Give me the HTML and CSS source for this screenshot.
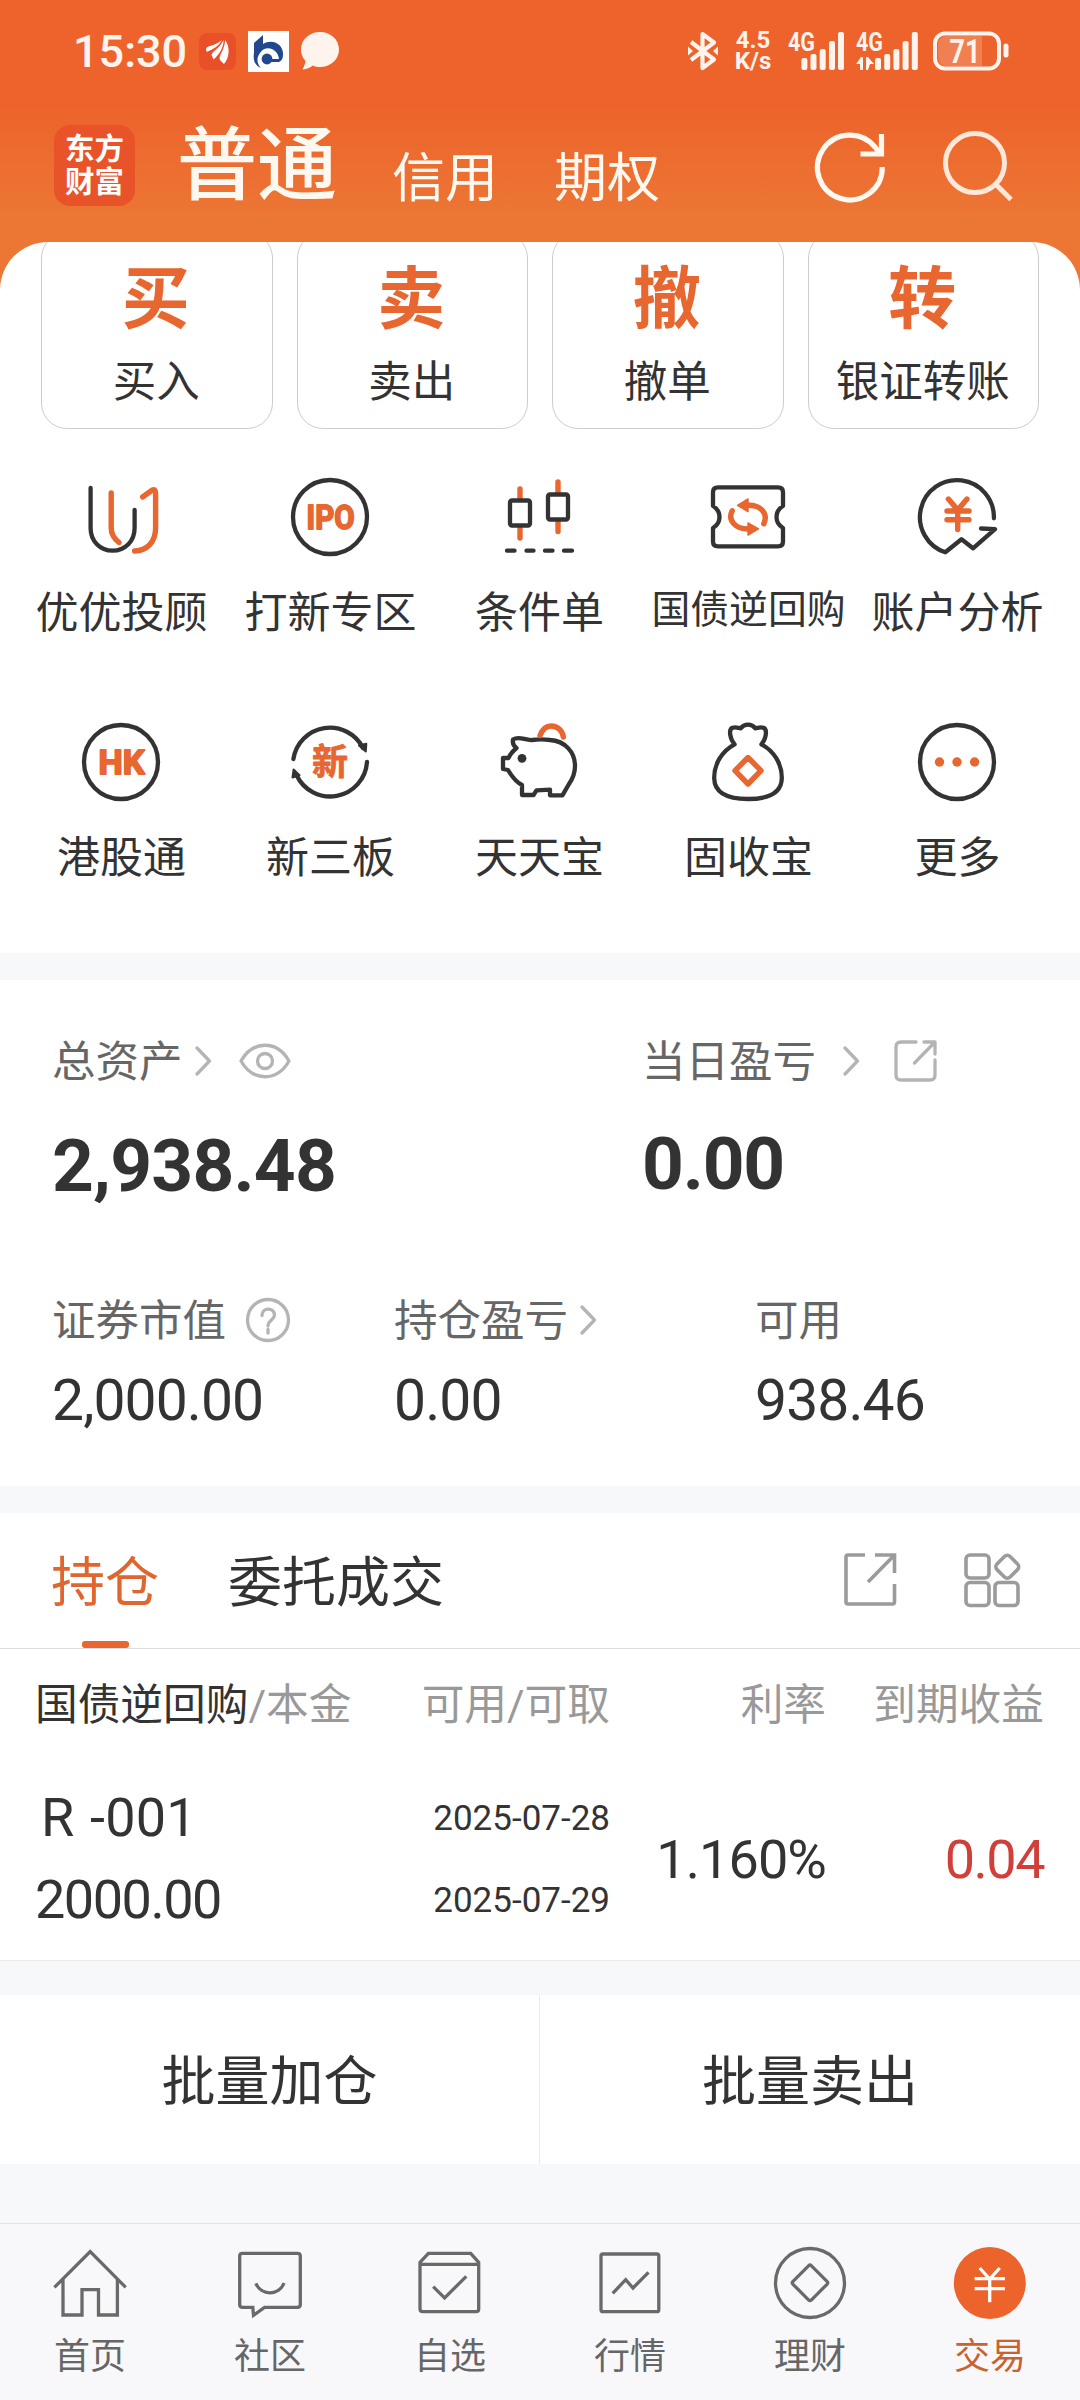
FILE: index.html
```html
<!DOCTYPE html>
<html lang="zh-CN">
<head>
<meta charset="utf-8">
<title>交易</title>
<link rel="stylesheet" href="styles.css">
</head>
<body>
<div class="app">
  <header class="header">
    <div class="status">
      <div class="status-left">
        <span class="clock">15:30</span>
        <svg class="st-app" width="37" height="37" viewBox="0 0 37 37"><rect width="37" height="37" rx="8" fill="#e9502a"/><path d="M7 17C6.500 12 15 14 23 7C20 13 14 16 8 19ZM13 23C11 19 20 17 24.500 7C25 14 20 22 14.500 26.500ZM22 28C17.500 24 26 18 26 7C31 13 31 24 25 31Z" fill="#fff"/></svg>
        <svg class="st-bank" width="41" height="41" viewBox="0 0 41 41"><rect width="41" height="41" fill="#fff"/><path d="M6 12L15 4V13C24 7 36 13 35 24C35 28 33 30 31 31H19V28H31C30 18 18 13 12 22C8 27 9 33 13 37C6 34 5 28 6 22Z" fill="#21478f"/><circle cx="19" cy="28" r="5.400" fill="#21478f"/></svg>
        <svg class="st-chat" width="38" height="38" viewBox="0 0 38 38"><path d="M19 0C29.500 0 38 7.500 38 17.500S29.500 35 19 35C16 35 14 34.500 12 33.500C9 35.500 5.500 37.300 2 37.500C1 37 4 34 4.500 29C1.500 26 0 22 0 17.500C0 7.500 8.500 0 19 0Z" fill="#fff3ed"/></svg>
      </div>
      <div class="status-right">
        <svg width="30" height="40" viewBox="0 0 30 40" fill="none" stroke="#fff3ed" stroke-width="4.200" stroke-linejoin="round"><path d="M3 11L26 28.500L14.500 37V3L26 11.500L3 29"/><path d="M0 15.500V24.500L5 20ZM30 15.500V24.500L25 20Z" fill="#fff3ed" stroke="none"/></svg>
        <div class="speed"><span>4.5</span><span>K/s</span></div>
        <svg class="sig1" width="57" height="40" viewBox="0 0 57 40" fill="#fff3ed"><text x="0" y="20" font-size="26" textLength="27" lengthAdjust="spacingAndGlyphs">4G</text><rect x="13.400" y="27" width="6" height="12" rx="2"/><rect x="22.500" y="23" width="6" height="16" rx="2"/><rect x="31.700" y="18" width="6" height="21" rx="2"/><rect x="41" y="10" width="6" height="29" rx="2"/><rect x="50" y="1" width="6" height="38" rx="2"/></svg>
        <svg class="sig2" width="63" height="40" viewBox="0 0 63 40" fill="#fff3ed"><text x="0" y="20" font-size="26" textLength="27" lengthAdjust="spacingAndGlyphs">4G</text><path d="M0 33L5 26H7V39H4V33ZM10 26H12L18 33H14L12 39H10Z"/><rect x="19" y="27" width="6" height="12" rx="2"/><rect x="28.200" y="23" width="6" height="16" rx="2"/><rect x="37.400" y="18" width="6" height="21" rx="2"/><rect x="46.600" y="10" width="6" height="29" rx="2"/><rect x="55.800" y="1" width="6" height="38" rx="2"/></svg>
        <svg class="battery" width="76" height="40" viewBox="0 0 76 40"><path d="M14 5H49V35H14Q5 35 5 26V14Q5 5 14 5Z" fill="#fff3ed" opacity=".2"/><rect x="2" y="2.500" width="64" height="35" rx="10" fill="none" stroke="#fff3ed" stroke-width="4"/><rect x="70.500" y="12.500" width="5" height="14" rx="2.500" fill="#fff3ed"/><text x="16.500" y="32" font-size="34" fill="#fff3ed" textLength="31" lengthAdjust="spacingAndGlyphs">71</text></svg>
      </div>
    </div>
    <div class="titlebar">
      <div class="logo"><span>东方</span><span>财富</span></div>
      <nav class="modes"><span class="mode-main">普通</span><span class="mode">信用</span><span class="mode mode-last">期权</span></nav>
      <svg class="refresh" width="72" height="72" viewBox="0 0 72 72" fill="none" stroke="#fff8f0" stroke-width="5.200"><path d="M67.300 36A32.400 32.400 0 1 1 60 16L66 24"/><path d="M45.500 23H66.500V3"/></svg>
      <svg class="search" width="72" height="72" viewBox="0 0 72 72" fill="none" stroke="#ffe7d9" stroke-width="5"><circle cx="33" cy="32" r="29.500"/><path d="M53.500 53L69 68.500"/></svg>
    </div>
  </header>

  <main class="sheet">
    <section class="cards">
      <div class="card"><b>买</b><span>买入</span></div>
      <div class="card"><b>卖</b><span>卖出</span></div>
      <div class="card"><b>撤</b><span>撤单</span></div>
      <div class="card"><b>转</b><span>银证转账</span></div>
    </section>

    <section class="shortcuts">
      <div class="shortcut"><svg class="ico" viewBox="0 0 80 80"><path d="M9.600 11V51.300C9.600 64 19 73.700 31.600 73.700S53.600 64 53.600 51.300V33"/><g class="or"><path d="M30.200 16V51C30.200 57 33 61.500 38 65.500"/><path d="M61.600 20L71 13.200Q74.600 11.500 74.600 16V51C74.600 65 66 73.600 53.600 74"/></g></svg><span>优优投顾</span></div>
      <div class="shortcut"><svg class="ico" viewBox="0 0 80 80"><circle cx="40" cy="40" r="37"/><text class="mark" x="16.500" y="52" font-size="34" textLength="48" lengthAdjust="spacingAndGlyphs">IPO</text></svg><span>打新专区</span></div>
      <div class="shortcut"><svg class="ico" viewBox="0 0 80 80"><g class="or"><path d="M21 12V22M21 50V61M59 5V16M59 45V54.500"/></g><rect x="11" y="23.500" width="20" height="25" rx="2"/><rect x="49" y="17.500" width="20" height="25" rx="2"/><path d="M8 73.700H15.500M27.500 73.700H34.500M46 73.700H53.500M65 73.700H73"/></svg><span>条件单</span></div>
      <div class="shortcut"><svg class="ico" viewBox="0 0 80 80"><path d="M10 10.300H70Q75 10.300 75 15V29Q68.500 33 68.500 40T75 51V64.500Q75 69.300 70 69.300H10Q5 69.300 5 64.500V51Q11.500 47 11.500 40T5 29V15Q5 10.300 10 10.300Z"/><g class="or"><path d="M24.200 33.700C19.500 43 27 52.300 41 52M39 28.300C53 27.500 60.500 37 55.800 46.700"/><path class="solid" d="M29.500 28.300L40 22V34.500ZM50.500 51.800L40 46V58Z"/></g></svg><span class="small">国债逆回购</span></div>
      <div class="shortcut"><svg class="ico" viewBox="0 0 80 80"><path d="M76.900 41.300A37 37 0 1 0 28.300 75.300L44.500 62.300L56 71.300L78 52.200L64 51.500"/><path class="or" d="M31.400 22L40.700 33L50 22M40.700 33V52.500M30 34H52M30 42.700H52"/></svg><span>账户分析</span></div>
      <div class="shortcut"><svg class="ico" viewBox="0 0 80 80"><circle cx="40" cy="40" r="37"/><text class="mark" x="17.500" y="52" font-size="33" textLength="46" lengthAdjust="spacingAndGlyphs">HK</text></svg><span>港股通</span></div>
      <div class="shortcut"><svg class="ico" viewBox="0 0 80 80"><path d="M3.400 37A37 37 0 0 1 73 26M77 40A37 37 0 0 1 6.500 53"/><path d="M69 23.500L76.300 21.800L75.800 29.500ZM3.600 47.500L9.500 53.200L2.500 55.500Z" fill="#333" stroke-width="2"/><text class="mark cn" x="22" y="53" font-size="36">新</text></svg><span>新三板</span></div>
      <div class="shortcut"><svg class="ico" viewBox="0 0 80 80"><path d="M14 17.500C20 13.500 26 18.500 33 18C40 17 44 17 51 18C66 19 76 30 76 44C76 52 73.500 57 70 62L63.400 73.300H51V67.700L37.500 68.300L34.500 73H23V63C17 60 12 53 9 48L4 47V36H9.500C11 32 14 29 17.500 26Q13 23 14 17.500Z"/><circle cx="23" cy="36.300" r="4.400" fill="#333" stroke="none"/><path class="or" d="M41 13.500C43.500 7 47 4 52 4C59 4 63.500 9 64.400 15"/></svg><span>天天宝</span></div>
      <div class="shortcut"><svg class="ico" viewBox="0 0 80 80"><path d="M26.600 22.300C22 17 20 7 25 5.700C28 4.800 30 6 32.800 6.300C36 1.500 44 1.500 47.200 6.300C50 6 52 4.800 55 5.700C60 7 58 17 53.400 22.300C66 29 74 42 73.800 56.300C73.500 71 60 77 40 77S6.500 71 6.200 56.300C6 42 14 29 26.600 22.300Z"/><path class="or" d="M40 35.500L53 48.700L40 62L27 48.700Z"/></svg><span>固收宝</span></div>
      <div class="shortcut"><svg class="ico" viewBox="0 0 80 80"><circle cx="40" cy="40" r="37"/><g fill="#e8662f" stroke="none"><circle cx="22.500" cy="40" r="4.700"/><circle cx="40" cy="40" r="4.700"/><circle cx="57.600" cy="40" r="4.700"/></g></svg><span>更多</span></div>
    </section>

    <section class="assets">
      <div class="asset-row totals">
        <div class="asset">
          <div class="asset-label"><span>总资产</span><svg class="chev" viewBox="0 0 17 28"><path d="M2 1L14.500 14L2 27"/></svg><svg class="eye" viewBox="0 0 52 36"><path d="M2 18C14-3 38-3 50 18C38 39 14 39 2 18Z"/><circle cx="26" cy="18" r="7.500"/></svg></div>
          <div class="total">2,938.48</div>
        </div>
        <div class="asset">
          <div class="asset-label"><span>当日盈亏</span><svg class="chev wide" viewBox="0 0 17 28"><path d="M2 1L14.500 14L2 27"/></svg><svg class="share" viewBox="0 0 43 42"><path d="M22 2H7Q2 2 2 7V35Q2 40 7 40H36Q41 40 41 35V20"/><path d="M30 2H41V14M41 2L20.500 23"/></svg></div>
          <div class="total zero">0.00</div>
        </div>
      </div>
      <div class="asset-row details">
        <div class="asset">
          <div class="asset-label"><span>证券市值</span><svg class="help" viewBox="0 0 44 44"><circle cx="22" cy="22" r="20.500"/><path d="M16 17.500C16 9 28.500 9 28.500 17C28.500 22 22 22 22 28"/><path d="M22 31.500V35"/></svg></div>
          <div class="value">2,000.00</div>
        </div>
        <div class="asset">
          <div class="asset-label"><span>持仓盈亏</span><svg class="chev" viewBox="0 0 17 28"><path d="M2 1L14.500 14L2 27"/></svg></div>
          <div class="value">0.00</div>
        </div>
        <div class="asset">
          <div class="asset-label"><span>可用</span></div>
          <div class="value">938.46</div>
        </div>
      </div>
    </section>

    <section class="positions">
      <div class="tabs">
        <span class="tab active">持仓</span>
        <span class="tab">委托成交</span>
        <svg class="export" width="53" height="53" viewBox="0 0 53 53"><path d="M21 2H4Q2 2 2 4V49Q2 51 4 51H48.500Q50.500 51 50.500 49V31M31 2H50.500V20M50.500 2L24 29"/></svg>
        <svg class="layout" width="57" height="55" viewBox="0 0 57 55"><rect x="2" y="2" width="23" height="23" rx="4"/><rect x="2" y="29.500" width="23" height="23" rx="4"/><rect x="31" y="29.500" width="23" height="23" rx="4"/><rect x="34" y="4.500" width="18.500" height="18.500" rx="4" transform="rotate(45 43.200 13.800)"/></svg>
      </div>
      <div class="grid head"><span><em>国债逆回购</em>/本金</span><span>可用/可取</span><span>利率</span><span>到期收益</span></div>
      <div class="grid row">
        <div class="stack name"><span class="code">R -001</span><span>2000.00</span></div>
        <div class="stack dates"><span>2025-07-28</span><span>2025-07-29</span></div>
        <span class="rate">1.160%</span>
        <span class="profit">0.04</span>
      </div>
    </section>

    <section class="batch"><span>批量加仓</span><span>批量卖出</span></section>
  </main>

  <nav class="tabbar">
    <div class="item"><svg class="nav-ico" viewBox="0 0 80 80"><path d="M4.400 44.300L40.200 8.700L75.700 44.300M13 36V72H32V46.700H48.500V72H67.400V36"/></svg><span>首页</span></div>
    <div class="item"><svg class="nav-ico" viewBox="0 0 80 80"><path d="M12.500 10.300H67.500Q70.300 10.300 70.300 13V61.500Q70.300 64.300 67.500 64.300H34.500L23.500 72.300L22.800 64.300H12.500Q9.700 64.300 9.700 61.500V13Q9.700 10.300 12.500 10.300Z"/><path d="M25.900 40.300C31 53 49 53 54 40"/></svg><span>社区</span></div>
    <div class="item"><svg class="nav-ico" viewBox="0 0 80 80"><path d="M10 21.300V66Q10 68.700 13 68.700H66Q68.700 68.700 68.700 66V19.300L60.700 10.300H18.400L10 19.300ZM10 21.300H68.700M23.200 43.700L34.600 55L56.300 33.300"/></svg><span>自选</span></div>
    <div class="item"><svg class="nav-ico" viewBox="0 0 80 80"><rect x="11" y="11" width="57.800" height="57.700" rx="2"/><path d="M22.700 50.300L35.700 36.700L43 45L58.500 29.300"/></svg><span>行情</span></div>
    <div class="item"><svg class="nav-ico" viewBox="0 0 80 80"><circle cx="40" cy="40" r="34.500"/><path d="M38.500 22.800Q40 21.300 41.500 22.800L57 38.300Q58.500 39.800 57 41.300L41.500 56.800Q40 58.300 38.500 56.800L23 41.300Q21.500 39.800 23 38.300Z"/></svg><span>理财</span></div>
    <div class="item on"><svg class="nav-ico" viewBox="0 0 80 80"><circle cx="39.800" cy="40" r="36" fill="#ec632b" stroke="none"/><path stroke="#fff" d="M29.700 25L39.700 36L49.700 25M39.700 36V59.300M24.600 35.700H54.900M24.600 45.700H54.900"/></svg><span>交易</span></div>
  </nav>
</div>
</body>
</html>
```

FILE: styles.css
```css
* { box-sizing: border-box; }
body {
  margin: 0;
  font-family: Roboto, "Noto Sans CJK SC", sans-serif;
  color: #333;
}
svg { display: block; flex: none; overflow: visible; }
.app {
  width: 1080px;
  height: 2400px;
  display: flex;
  flex-direction: column;
  overflow: hidden;
  background: #f7f8fa;
}

/* header */
.header {
  height: 302px;
  flex: none;
  background: linear-gradient(#ed632b 0, #ed632b 105px, #ec7634 215px, #ec7634 100%);
}
.status {
  height: 102px;
  padding: 0 71px 0 73px;
  display: flex;
  justify-content: space-between;
  align-items: center;
}
.status-left, .status-right { display: flex; align-items: center; }
.clock {
  width: 126px;
  font-size: 45px;
  font-weight: 500;
  color: #fff3ed;
}
.st-bank { margin-left: 12px; }
.st-chat { margin-left: 12px; }
.speed {
  width: 42px;
  margin-left: 14px;
  display: flex;
  flex-direction: column;
  align-items: center;
  font-size: 24px;
  font-weight: 700;
  line-height: 21px;
  color: #fff3ed;
}
.status-right text { font-family: Roboto, sans-serif; font-weight: 700; }
.sig1 { margin-left: 14px; }
.sig2 { margin-left: 11px; }
.battery { margin-left: 14px; }
.titlebar {
  height: 140px;
  padding: 0 66px 0 54px;
  display: flex;
  align-items: flex-start;
}
.logo {
  width: 81px;
  height: 81px;
  margin-top: 23px;
  padding-top: 8px;
  border-radius: 16px;
  background: #e95329;
  color: #fff;
  font-size: 29.500px;
  font-weight: 700;
  line-height: 33px;
  display: flex;
  flex-direction: column;
  align-items: center;
}
.modes {
  flex: 1;
  margin-left: 42px;
  display: flex;
  align-items: flex-start;
  color: #fff8f0;
}
.mode-main { font-size: 80px; font-weight: 500; line-height: 128px; }
.mode { margin-left: 55px; font-size: 53px; line-height: 154px; }
.mode-last { margin-left: 56px; }
.refresh { margin-top: 29px; }
.search { margin: 29px 0 0 55px; }

/* trade cards */
.sheet { margin-top: -60px; flex: none; border-radius: 48px 48px 0 0; overflow: hidden; }
.cards {
  height: 187px;
  padding: 0 41px;
  display: flex;
  gap: 24px;
  background: #fff;
}
.card {
  flex: 1;
  height: 197px;
  margin-top: -10px;
  border: 1px solid #ccc;
  border-radius: 26px;
  display: flex;
  flex-direction: column;
  align-items: center;
}
.card b { margin: 24px 2px 0 0; font-size: 68px; line-height: 86px; color: #e8662f; }
.card span { margin: 10px 1px 0 0; font-size: 43.500px; line-height: 60px; }

/* shortcuts */
.shortcuts {
  height: 524px;
  padding: 48px 0 0 16px;
  display: grid;
  grid-template-columns: repeat(5, 209px);
  grid-auto-rows: 245px;
  background: #fff;
}
.shortcut { display: flex; flex-direction: column; align-items: center; white-space: nowrap; }
.shortcut span { margin: 26px 0 0 2px; font-size: 43px; line-height: 60px; }
.shortcut .small { margin-top: 23px; font-size: 38.800px; }
.ico {
  width: 80px;
  height: 80px;
  fill: none;
  stroke: #333;
  stroke-width: 4.300;
  stroke-linecap: round;
  stroke-linejoin: round;
}
.or { stroke: #e8662f; stroke-width: 5.400; }
.or .solid { fill: #e8662f; stroke-width: 1.500; }
.mark { font-family: Roboto, sans-serif; font-weight: 700; fill: #e8662f; stroke: #e8662f; stroke-width: 1.800; }
.mark.cn { font-family: "Noto Sans CJK SC", sans-serif; stroke-width: .8; }

/* assets */
.assets {
  height: 506px;
  margin-top: 27px;
  padding: 51px 52px 0;
  background: #fff;
}
.asset-row { display: grid; }
.totals { grid-template-columns: 590px 1fr; height: 259px; }
.details { grid-template-columns: 342px 361px 1fr; }
.asset-label {
  height: 60px;
  display: flex;
  align-items: center;
  font-size: 43.500px;
  line-height: 60px;
  color: #666;
}
.asset-label span { padding-top: 3px; }
.asset-label svg { fill: none; stroke: #b4b4b4; stroke-width: 3.300; stroke-linecap: round; stroke-linejoin: round; }
.chev { width: 17px; height: 28px; margin-left: 12px; }
.chev.wide { margin-left: 27px; }
.eye { width: 52px; height: 36px; margin-left: 27px; }
.share { width: 43px; height: 42px; margin-left: 34px; }
.help { width: 44px; height: 44px; margin-left: 20px; }
.total { margin-top: 33px; font-size: 73px; font-weight: 700; line-height: 84px; letter-spacing: -0.800px; }
.total.zero { margin-top: 31px; letter-spacing: -1.200px; }
.value { margin-top: 18px; font-size: 57px; line-height: 66px; letter-spacing: -0.900px; }

/* positions */
.positions { height: 448px; margin-top: 27px; background: #fff; border-bottom: 1px solid #e9ebee; }
.tabs {
  height: 136px;
  padding: 0 59px 0 51px;
  display: flex;
  align-items: center;
  border-bottom: 1px solid #ddd;
}
.tab { height: 135px; padding-top: 5px; font-size: 54px; line-height: 131px; margin-right: 69px; white-space: nowrap; }
.tab.active { color: #e0662f; display: flex; flex-direction: column; align-items: center; }
.tab.active::after { content: ""; width: 47px; height: 7px; margin-top: -8px; border-radius: 3px; background: #e8662f; flex: none; }
.export { margin-left: auto; margin-bottom: 3px; }
.layout { margin-left: 67px; }
.export, .layout { fill: none; stroke: #9b9b9b; stroke-width: 3.600; }
.grid { display: grid; grid-template-columns: 371px 204px 216px 218px; padding: 0 35px; }
.grid > * { text-align: right; }
.grid > :first-child { text-align: left; }
.head { height: 110px; padding-top: 2px; align-items: center; font-size: 42.700px; line-height: 60px; color: #999; white-space: nowrap; }
.head em { font-style: normal; color: #333; }
.row { height: 200px; align-items: center; font-size: 54px; letter-spacing: -0.900px; }
.stack { display: flex; flex-direction: column; line-height: 82px; }
.name { letter-spacing: -1.500px; }
.code { padding-left: 6px; letter-spacing: 0.200px; word-spacing: 2px; }
.dates { padding-top: 1px; font-size: 35px; letter-spacing: 0; }
.profit { letter-spacing: -1.500px; color: #d0403a; }

/* batch buttons */
.batch {
  height: 169px;
  margin-top: 34px;
  display: grid;
  grid-template-columns: 539px 541px;
  background: #fff;
  font-size: 54px;
  line-height: 168px;
  text-align: center;
}
.batch span { height: 169px; padding-top: 4px; }
.batch span + span { border-left: 1px solid #ebebeb; }

/* bottom bar */
.tabbar {
  height: 177px;
  margin-top: auto;
  flex: none;
  display: grid;
  grid-template-columns: repeat(6, 1fr);
  border-top: 1px solid #e2e2e4;
  background: #f8f8fa;
}
.item { display: flex; flex-direction: column; align-items: center; padding-top: 19px; color: #666; }
.item span { margin-top: 11px; font-size: 36px; line-height: 46px; }
.item.on { color: #c9622f; }
.nav-ico { width: 80px; height: 80px; fill: none; stroke: #696969; stroke-width: 3.300; }
```
